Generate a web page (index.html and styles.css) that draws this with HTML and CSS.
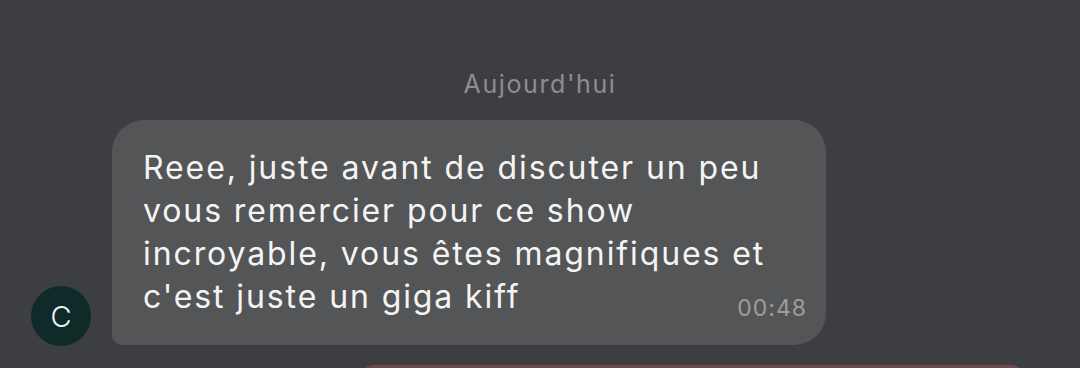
FILE: index.html
```html
<!DOCTYPE html>
<html lang="fr">
<head>
<meta charset="utf-8">
<link rel="stylesheet" href="styles.css">
</head>
<body>
<main class="chat">
  <div class="date">Aujourd'hui</div>
  <div class="row">
    <div class="avatar">C</div>
    <div class="bubble">
      <div class="line">Reee, juste avant de discuter un peu</div>
      <div class="line">vous remercier pour ce show</div>
      <div class="line">incroyable, vous êtes magnifiques et</div>
      <div class="line last"><span>c'est juste un giga kiff</span><span class="time">00:48</span></div>
    </div>
  </div>
  <div class="next"></div>
</main>
</body>
</html>
```
FILE: styles.css
```css
html, body {
  margin: 0;
  padding: 0;
  height: 368px;
  overflow: hidden;
  background: #3d3e41;
}
.chat {
  display: flex;
  flex-direction: column;
  padding-top: 67px;
  font-family: Inter, "Noto Sans", sans-serif;
}
.date {
  align-self: center;
  color: #8d8e90;
  font-size: 25px;
  letter-spacing: 1.6px;
  line-height: 34px;
  margin-bottom: 19px;
}
.row {
  display: flex;
  align-items: flex-end;
  gap: 21px;
  padding-left: 31px;
}
.avatar {
  width: 60px;
  height: 60px;
  border-radius: 50%;
  background: #0e2b29;
  color: #f2f4f4;
  font-size: 29px;
  font-weight: 300;
  display: flex;
  align-items: center;
  justify-content: center;
  margin-bottom: -1px;
}
.bubble {
  width: 714px;
  box-sizing: border-box;
  background: #545556;
  border-radius: 32px 32px 32px 10px;
  padding: 26px 19px 27px 31px;
  color: #f4f4f4;
  font-size: 32px;
  letter-spacing: 1.9px;
  line-height: 43px;
}
.last {
  display: flex;
  justify-content: space-between;
  align-items: flex-end;
}
.time {
  color: #9c9d9e;
  font-size: 23px;
  letter-spacing: 1px;
  line-height: 24px;
  margin-bottom: -2px;
}
.next {
  margin-top: 20px;
  margin-left: 357px;
  width: 671px;
  height: 40px;
  background: #6d4a4c;
  border-radius: 18px 18px 0 0;
}
```
